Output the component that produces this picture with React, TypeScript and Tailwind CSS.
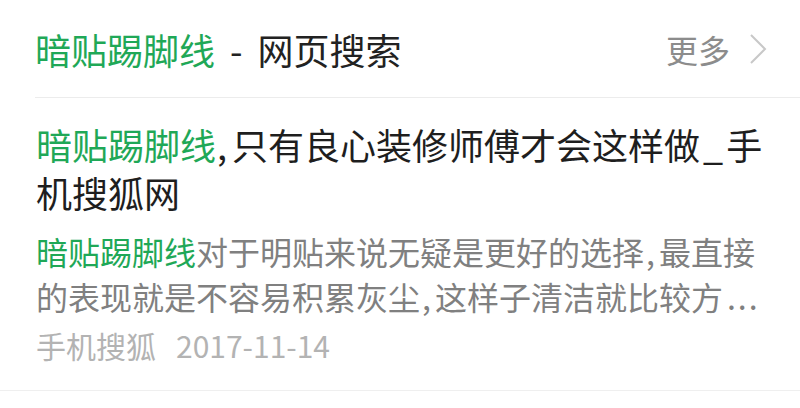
import React from "react";

const font = { fontFamily: '"Noto Sans CJK SC", "Noto Sans", sans-serif' };

export default function App() {
  return (
    <div className="w-[800px] h-[408px] bg-white overflow-hidden" style={font}>
      <div className="ml-[35px] h-[98px] border-b border-[#ececec] flex items-center justify-between pt-[1px] pr-[32px]">
        <div className="text-[36px] leading-[48px] whitespace-nowrap flex items-center">
          <span className="text-[#1fa857]">暗贴踢脚线</span>
          <span className="text-[#222222] ml-[15px]">-</span>
          <span className="text-[#222222] ml-[15px]">网页搜索</span>
        </div>
        <div className="flex items-center">
          <span className="text-[32px] leading-[40px] text-[#8c8c8c]">更多</span>
          <svg width="20" height="32" viewBox="0 0 20 32" className="ml-[18px]">
            <path d="M3 2 L17 16 L3 30" fill="none" stroke="#c8c8c8" strokeWidth="2" />
          </svg>
        </div>
      </div>
      <div className="pl-[25px] pt-[22px] border-b border-[#efefef] pb-[25px]">
        <div className="ml-[11px] w-[740px]">
          <div className="w-[735px] text-[36px] leading-[48px] text-[#1e1e1e]">
            <span className="text-[#1fa857]">暗贴踢脚线</span>
            <span className="ml-[1px] mr-[5px]">,</span>只有良心装修师傅才会这样做<span className="mx-[3px]">_</span>手机搜狐网
          </div>
          <div className="mt-[13px] w-[728px] text-[32px] leading-[45px] text-[#808080]">
            <span className="text-[#1fa857]">暗贴踢脚线</span>对于明贴来说无疑是更好的选择<span className="ml-[2px] mr-[4px]">,</span>最直接的表现就是不容易积累灰尘<span className="ml-[2px] mr-[4px]">,</span>这样子清洁就比较方<span className="ml-[4px] tracking-[2px]">...</span>
          </div>
          <div className="mt-[6px] text-[30px] leading-[40px] text-[#b3b3b3] whitespace-nowrap">
            手机搜狐<span className="ml-[20px]">2017-11-14</span>
          </div>
        </div>
      </div>
    </div>
  );
}
